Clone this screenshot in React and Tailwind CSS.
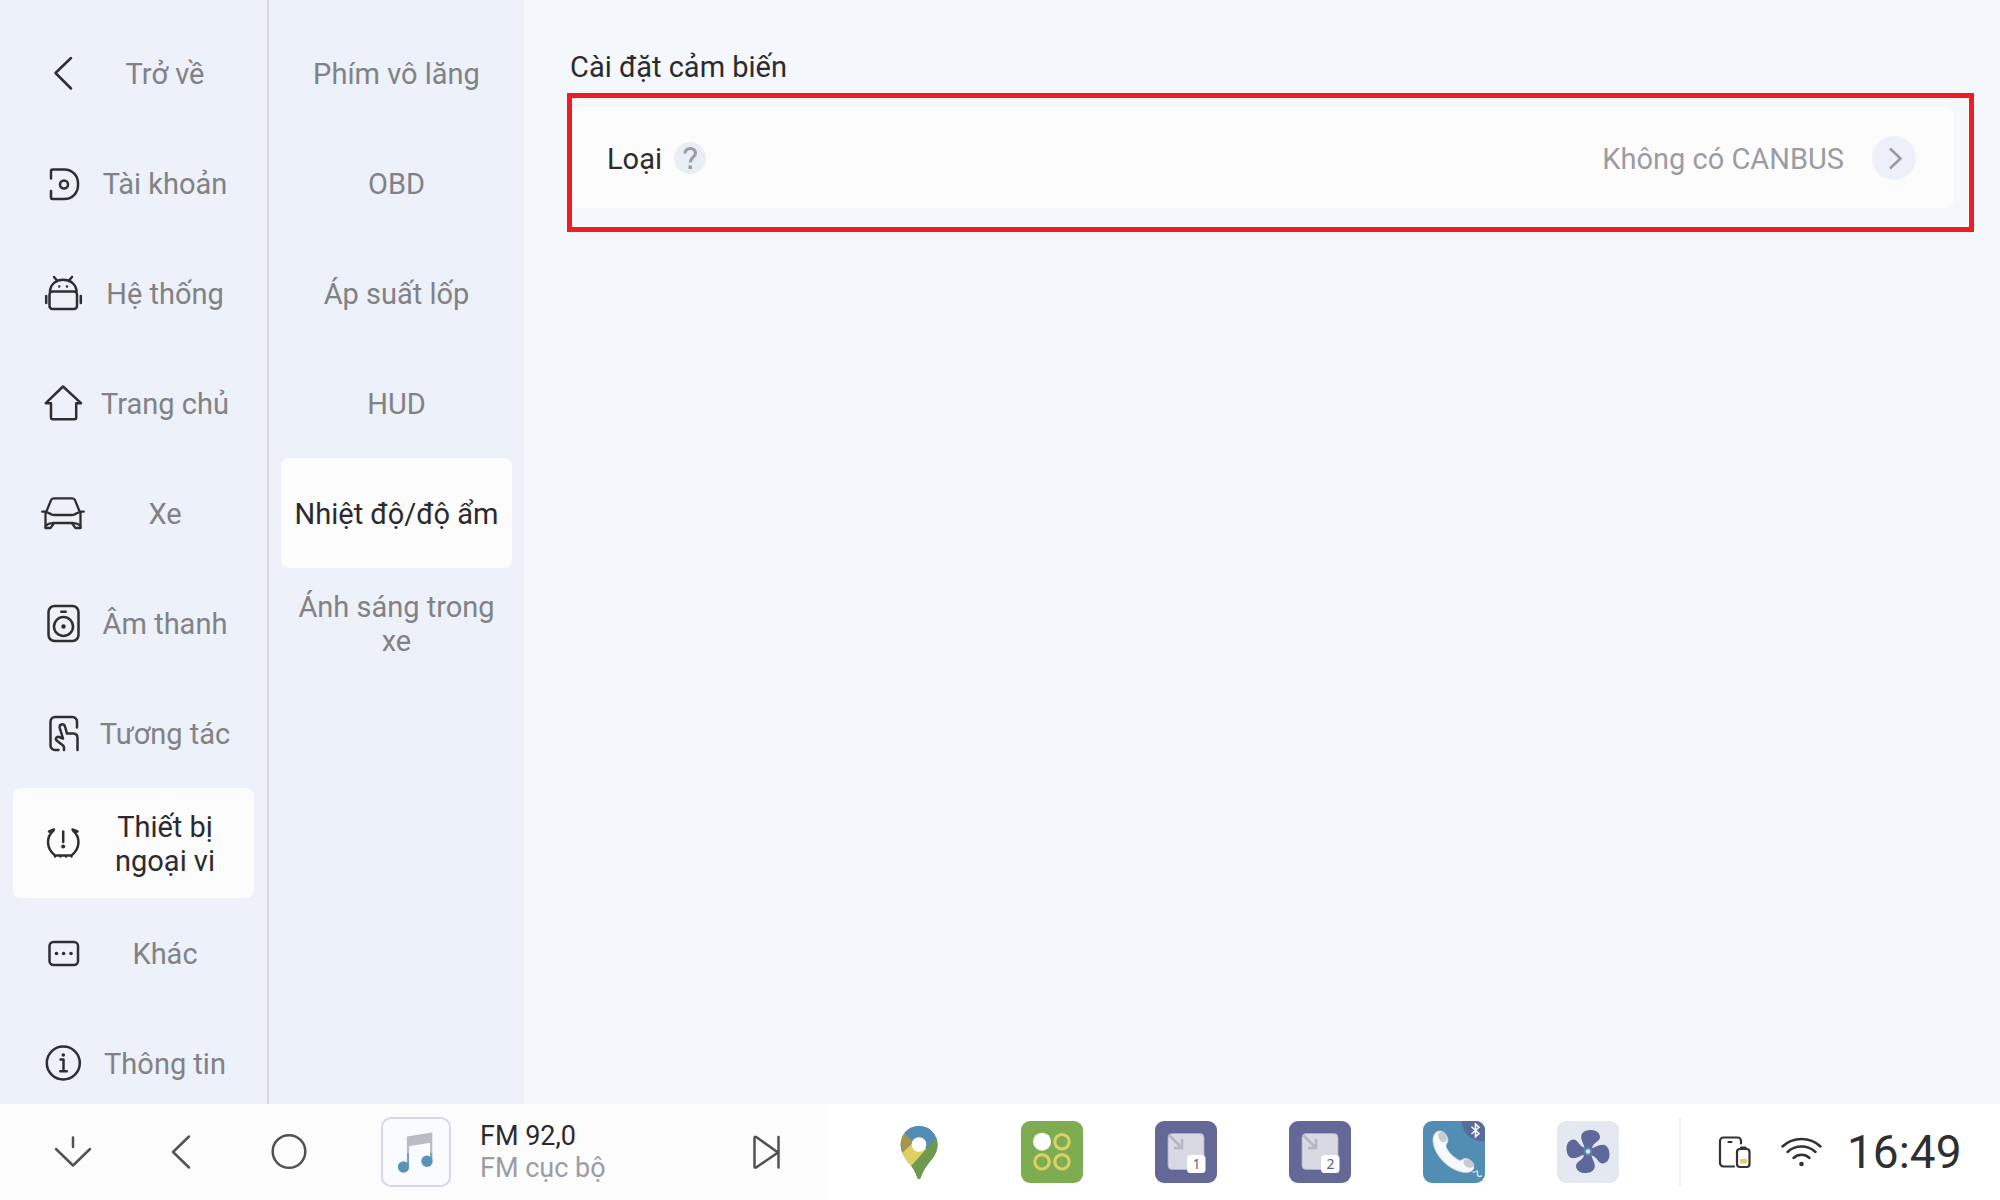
function NavIcon({ children }) {
  return (
    <svg
      viewBox="0 0 44 44"
      className="size-11 shrink-0"
      fill="none"
      stroke="#2f2f31"
      strokeWidth="2.5"
      strokeLinecap="round"
      strokeLinejoin="round"
      aria-hidden="true"
    >
      {children}
    </svg>
  );
}

const icons = {
  back: <path d="M30 7 14.5 22 30 37.5" />,
  account: (
    <>
      <path d="M10 17.5V10a1.5 1.5 0 0 1 1.5-1.5H23.5A13.5 13.5 0 0 1 37 22v2.500A13.5 13.5 0 0 1 23.5 38H11.5A1.5 1.5 0 0 1 10 36.5V30" />
      <circle cx="23" cy="23.5" r="4" />
    </>
  ),
  system: (
    <>
      <rect x="8.5" y="20.5" width="27.5" height="17.5" rx="3" />
      <path d="M9 20.5C9.5 13 15 8.8 22.2 8.8S35 13 35.6 20.500M13 6l3.500 4M31 6l-3.500 4M5.200 25v7M39.800 25v7" />
      <circle cx="18.2" cy="15.5" r="1.2" fill="#2f2f31" stroke="none" />
      <circle cx="26" cy="15.5" r="1.2" fill="#2f2f31" stroke="none" />
    </>
  ),
  home: <path d="M22 5.5 4.800 22.200H10V37a1.200 1.200 0 0 0 1.200 1.200H34A1.200 1.200 0 0 0 35.200 37V22.200H40Z" />,
  car: (
    <>
      <path
        d="M5.800 19.5 10 9.200A2.800 2.800 0 0 1 12.600 7.400H31.400A2.800 2.800 0 0 1 34 9.200L38.200 19.5M1.200 20.700H5L11 23.600Q12 24 13.200 24H30.800Q32 24 33 23.600L39 20.700H42.800M4.5 22V36.800M39.5 22V36.800"
        strokeWidth="2.300"
      />
      <path
        d="M12 32H32M4.5 37H9.500L13 32.200C9.500 31.800 7 32.600 4.800 34.800M39.5 37H34.500L31 32.200C34.500 31.800 37 32.600 39.200 34.800"
        strokeWidth="2.300"
      />
    </>
  ),
  sound: (
    <>
      <rect x="7.5" y="5" width="30" height="35" rx="6" />
      <circle cx="22.5" cy="25.5" r="9.5" />
      <circle cx="22.5" cy="25.5" r="2.200" fill="#2f2f31" stroke="none" />
      <path d="M20.300 10.800h4.400" />
    </>
  ),
  touch: (
    <>
      <path d="M36 16.5V10.5a4.5 4.5 0 0 0-4.5-4.500H14a4.5 4.5 0 0 0-4.5 4.500V34.5a4.5 4.5 0 0 0 4.5 4.500H17.5" />
      <path d="M23 39V36.5Q23 35.300 22 34.5L16 29.800C13.600 27.800 15.600 25.300 18 26L22 27.5 18.700 16.800C18 13 22.800 12 24 15.5L26 22.600H32.500Q36.500 23 36.500 27V39" />
    </>
  ),
  tpms: (
    <>
      <path d="M12.5 9.500C5 16 5 27.5 14 34.5H30.500C39.5 27.5 39.5 16 32 9.500M8 10.5 13 8.500M36.500 10.5 31.500 8.500M14 35.200v.2M19.500 35.200v.2M25 35.200v.2M30.500 35.200v.2" />
      <path d="M22.200 10.500v10.500" />
      <circle cx="22.200" cy="25.500" r="2" fill="#2f2f31" stroke="none" />
    </>
  ),
  more: (
    <>
      <rect x="8.500" y="11" width="28.500" height="23" rx="4" />
      <g fill="#2f2f31" stroke="none">
        <circle cx="15.500" cy="22.500" r="1.800" />
        <circle cx="22.600" cy="22.500" r="1.800" />
        <circle cx="30" cy="22.500" r="1.800" />
      </g>
    </>
  ),
  info: (
    <>
      <circle cx="22.300" cy="22" r="16.500" />
      <path d="M19.500 18.500H22.500V30M19.300 30.200H25.800" />
      <circle cx="22.300" cy="14" r="1.800" fill="#2f2f31" stroke="none" />
    </>
  ),
};

const mainNav = [
  ["Trở về", "back"],
  ["Tài khoản", "account"],
  ["Hệ thống", "system"],
  ["Trang chủ", "home"],
  ["Xe", "car"],
  ["Âm thanh", "sound"],
  ["Tương tác", "touch"],
  ["Thiết bị ngoại vi", "tpms"],
  ["Khác", "more"],
  ["Thông tin", "info"],
];

const subNav = ["Phím vô lăng", "OBD", "Áp suất lốp", "HUD", "Nhiệt độ/độ ẩm", "Ánh sáng trong xe"];

function MainNav() {
  return (
    <nav className="w-[269px] shrink-0 overflow-hidden border-r-2 border-[#d8d8e2] px-[13px] pt-[18px]">
      {mainNav.map(([label, icon]) => {
        const active = icon === "tpms";
        return (
          <button
            key={label}
            type="button"
            aria-current={active ? "page" : undefined}
            className={
              active
                ? "flex h-[110px] w-full items-center rounded-lg bg-[#fcfcfd] pl-7 text-[#2b2b2d]"
                : "flex h-[110px] w-full items-center rounded-lg pl-7 text-[#828284]"
            }
          >
            <NavIcon>{icons[icon]}</NavIcon>
            <span className="ml-3 w-[136px] shrink-0 pt-0.5 text-center">{label}</span>
          </button>
        );
      })}
    </nav>
  );
}

function SubNav() {
  return (
    <nav className="w-[255px] shrink-0 overflow-hidden px-3 pt-[18px]">
      {subNav.map((label, i) => (
        <button
          key={label}
          type="button"
          aria-current={i === 4 ? "page" : undefined}
          className={
            i === 4
              ? "block h-[110px] w-full rounded-lg bg-[#fcfcfd] px-3 pt-0.5 text-[#2b2b2d]"
              : "block h-[110px] w-full rounded-lg px-3 pt-0.5 text-[#828284]"
          }
        >
          {label}
        </button>
      ))}
    </nav>
  );
}

function Settings() {
  return (
    <main className="min-w-0 flex-1 bg-[#f4f7fc] pt-[50px] pr-[26px] pl-[43px]">
      <h1 className="pl-[3px] text-[#2b2b2d]">Cài đặt cảm biến</h1>
      <section className="mt-[9px] border-5 border-[#ee1c24] pt-[9px] pr-[15px] pb-[19px]">
        <div className="flex h-[101px] items-center rounded-lg bg-[#fcfcfd] pr-[38px] pl-[35px]">
          <span className="pt-0.5 text-[#2b2b2d]">Loại</span>
          <button
            type="button"
            aria-label="Trợ giúp"
            className="ml-3 flex size-8 items-center justify-center rounded-full bg-[#e9eef6]"
          >
            <svg viewBox="0 0 32 32" className="size-8" fill="none" stroke="#9a9ba1" strokeWidth="3" aria-hidden="true">
              <path d="M11 11.5C11 4.800 21.500 4.800 21.500 11.200C21.500 15 16.200 15.500 16.200 20.500" />
              <path d="M16.200 23.500v3.500" strokeWidth="3.500" />
            </svg>
          </button>
          <span className="ml-auto pt-0.5 text-[#9b9ca2]">Không có CANBUS</span>
          <button
            type="button"
            aria-label="Chọn loại"
            className="ml-7 flex size-11 items-center justify-center rounded-full bg-[#ecf1f9]"
          >
            <svg viewBox="0 0 44 44" className="size-11" fill="none" stroke="#98999f" strokeWidth="2.500" aria-hidden="true">
              <path d="M18 12.500 28.500 22.500 18 32.500" />
            </svg>
          </button>
        </div>
      </section>
    </main>
  );
}

function BarButton({ label, children, className }) {
  return (
    <button type="button" aria-label={label} className={className}>
      <svg
        viewBox="0 0 44 44"
        className="size-11"
        fill="none"
        stroke="#515153"
        strokeWidth="2.500"
        strokeLinecap="round"
        strokeLinejoin="round"
        aria-hidden="true"
      >
        {children}
      </svg>
    </button>
  );
}

function MusicCover() {
  return (
    <svg viewBox="0 0 66 66" className="size-[66px]" aria-hidden="true">
      <path d="M24 17.500 49 13.500V23.500L24 27.500Z" fill="#b9bbc5" />
      <path d="M25 18V47M48.200 14V41" stroke="#b9bbc5" strokeWidth="2.200" />
      <path d="M25 34V47M48.200 34V41" stroke="#7f9fbb" strokeWidth="2" />
      <circle cx="20.500" cy="48" r="5.700" fill="#5a93b8" />
      <circle cx="44" cy="42.300" r="5.700" fill="#5a93b8" />
    </svg>
  );
}

function MapIcon() {
  return (
    <svg viewBox="0 0 62 62" className="size-[62px]" aria-hidden="true">
      <defs>
        <clipPath id="pin">
          <path d="M32 5C21 5 13.700 13.500 13.700 23.500C13.700 30 16.500 35.500 21 41C25.500 46 28.500 51 30.300 56.500C31 58.600 33 58.600 33.700 56.500C35.500 51 38.500 46 43 40.500C47.500 35.500 50.500 30 50.500 23.500C50.500 13.500 43 5 32 5Z" />
        </clipPath>
      </defs>
      <g clipPath="url(#pin)">
        <rect width="62" height="62" fill="#518db5" />
        <path d="M8 4 31 22.500 40 28 22 51 8 40Z" fill="#dfd061" />
        <path d="M8 4 28 20 15 32H8Z" fill="#a3954f" />
        <path d="M13 0H50L38 20 25 19.500 18 12.500Z" fill="#518db5" />
        <path d="M52 14 24 45 31 62 54 46Z" fill="#6d9a4c" />
      </g>
      <circle cx="32" cy="23.500" r="7.300" fill="#fff" />
    </svg>
  );
}

function AppsIcon() {
  return (
    <svg viewBox="0 0 62 62" className="size-[62px]" aria-hidden="true">
      <rect width="62" height="62" rx="9" fill="#7dac51" />
      <circle cx="21" cy="20.700" r="9" fill="#fff" />
      <g fill="none" stroke="#dccf68" strokeWidth="3.200">
        <circle cx="41" cy="20.700" r="7.200" />
        <circle cx="21" cy="40.800" r="7.200" />
        <circle cx="41" cy="40.800" r="7.200" />
      </g>
    </svg>
  );
}

function WindowIcon({ number }) {
  return (
    <svg viewBox="0 0 62 62" className="size-[62px]" aria-hidden="true">
      <rect width="62" height="62" rx="9" fill="#646897" />
      <rect x="13" y="12.500" width="36" height="36" rx="4" fill="#d8d9e3" stroke="#aeb0c0" strokeWidth="0.800" />
      <path d="M14.500 14.500 26 26M19 27H27V18" fill="none" stroke="#b6b7c2" strokeWidth="2.600" />
      <rect x="32" y="34" width="18.500" height="18" rx="3.500" fill="#fff" />
      <text
        x="41.500"
        y="48"
        textAnchor="middle"
        fill="#5b5f92"
        fontFamily="'Noto Sans', sans-serif"
        fontSize="14"
      >
        {number}
      </text>
    </svg>
  );
}

function PhoneIcon() {
  return (
    <svg viewBox="0 0 62 62" className="size-[62px]" aria-hidden="true">
      <defs>
        <clipPath id="tile">
          <rect width="62" height="62" rx="9" />
        </clipPath>
      </defs>
      <g clipPath="url(#tile)">
        <rect width="62" height="62" fill="#528db3" />
        <circle cx="59" cy="0" r="20" fill="#5a6a9a" />
      </g>
      <path d="M48.500 5.800 56 12.500 52.500 15.800V3L56 6.300 48.500 13" fill="none" stroke="#fff" strokeWidth="1.500" />
      <path
        d="M17 10C12.500 10 10 14 10 19.500C10.500 34 27 51 43 51.500C48.500 51.500 52 48.500 50.500 44C49.500 39.500 44 36.500 40.500 38C38.500 39.500 37 40 34.500 38.500C29 35 25.500 31 23.500 27C22.500 25 23 23.500 24.300 21.500C26.500 17.500 22 10 17 10Z"
        fill="#f7f8fc"
        stroke="#d3d6e4"
        strokeWidth="0.800"
      />
      <ellipse cx="19.500" cy="16" rx="3.800" ry="5.500" transform="rotate(-30 19.500 16)" fill="#c9cad2" />
      <ellipse cx="45.500" cy="42.500" rx="5.500" ry="3.800" transform="rotate(30 45.500 42.500)" fill="#c9cad2" />
      <path d="M49.500 51.500 54.500 50V54.500L56 55.500 59 54.800" fill="none" stroke="#e8ebf4" strokeWidth="1.200" />
    </svg>
  );
}

function FanIcon() {
  const blade =
    "M27.500 29.500C28.500 24.500 24 21 24.200 15.500C24.500 11 29 9 34 9C39.500 9 43.300 12.500 43 16.300C42.500 21.500 35.500 20.500 34.300 29.500Z";
  return (
    <svg viewBox="0 0 62 62" className="size-[62px]" aria-hidden="true">
      <rect width="62" height="62" rx="9" fill="#e4e8f0" />
      <g fill="#60679b">
        <path d={blade} />
        <path d={blade} transform="rotate(90 31 30.500)" />
        <path d={blade} transform="rotate(180 31 30.500)" />
        <path d={blade} transform="rotate(270 31 30.500)" />
      </g>
      <circle cx="31" cy="30.500" r="4.300" fill="#528db3" />
      <circle cx="31" cy="30.500" r="2.200" fill="#e4e8f0" />
    </svg>
  );
}

const apps = [
  ["Bản đồ", <MapIcon />],
  ["Ứng dụng", <AppsIcon />],
  ["Cửa sổ 1", <WindowIcon number="1" />],
  ["Cửa sổ 2", <WindowIcon number="2" />],
  ["Điện thoại", <PhoneIcon />],
  ["Điều hòa", <FanIcon />],
];

function StatusArea() {
  return (
    <div className="flex h-[68px] w-[321px] shrink-0 items-center self-center border-l-2 border-[#eef2f7] pl-8">
      <svg viewBox="0 0 44 44" className="size-11" fill="none" stroke="#323234" strokeWidth="2.200" strokeLinecap="round" strokeLinejoin="round" aria-hidden="true">
        <path d="M21 36.500H10.500A3.500 3.500 0 0 1 7 33V11A3.500 3.500 0 0 1 10.500 7.500H24.500A3.500 3.500 0 0 1 28 11V13.500M15.500 12H18.500" />
        <rect x="24" y="19" width="12.500" height="18" rx="3" />
        <path d="M28 17.500H32.500" />
        <path d="M27 29H32.500Q34 29 34 30.500V32Q34 33.500 32.500 33.500H27Z" fill="#dfd061" stroke="none" />
      </svg>
      <svg viewBox="0 0 44 44" className="ml-[22px] size-11" fill="none" stroke="#323234" strokeWidth="2.500" strokeLinecap="round" aria-hidden="true">
        <path d="M3.500 16.500C14 6.500 31 6.500 41.500 16.500M8.500 22C16.500 14.800 28.500 14.800 36.500 22M14.500 28C19 23.800 26 23.800 30.500 28" />
        <circle cx="22.500" cy="34" r="2.300" fill="#323234" stroke="none" />
      </svg>
      <time className="ml-6 text-[46px] leading-[54px] text-[#2f2f31]">16:49</time>
    </div>
  );
}

function BottomBar() {
  return (
    <footer className="flex h-24 shrink-0 bg-white">
      <div className="flex w-[828px] min-w-0 items-center bg-[#fcfcfd] pr-[38px] pl-[51px]">
        <BarButton label="Ẩn">
          <path d="M5 19 22 35.500 39 19" />
          <path d="M22 7.500V17" />
        </BarButton>
        <BarButton label="Quay lại" className="ml-16">
          <path d="M30 6.500 14 22 30 37.500" />
        </BarButton>
        <BarButton label="Màn hình chính" className="ml-16">
          <circle cx="22" cy="21.500" r="16.300" />
        </BarButton>
        <div className="ml-[70px] size-[70px] rounded-[10px] border-2 border-[#d8d8e2] bg-[#fafbfe]">
          <MusicCover />
        </div>
        <div className="ml-[29px] text-[27px] leading-8">
          <p className="text-[#2b2b2d]">FM 92,0</p>
          <p className="text-[#9b9ca2]">FM cục bộ</p>
        </div>
        <BarButton label="Tiếp theo" className="ml-auto">
          <path d="M8.500 8V36.500Q8.500 38.500 10.500 37.200L32 22.500 10.500 7.200Q8.500 6 8.500 8ZM32.500 7V37.500" />
        </BarButton>
      </div>
      <div className="flex min-w-0 flex-1 items-center justify-between pr-[60px] pl-[59px]">
        {apps.map(([label, icon]) => (
          <button key={label} type="button" aria-label={label}>
            {icon}
          </button>
        ))}
      </div>
      <StatusArea />
    </footer>
  );
}

export default function App() {
  return (
    <div className="flex h-screen flex-col overflow-hidden bg-[#ecf1fa] font-[Roboto,sans-serif] text-[29px] leading-[34px]">
      <div className="flex min-h-0 flex-1">
        <MainNav />
        <SubNav />
        <Settings />
      </div>
      <BottomBar />
    </div>
  );
}
